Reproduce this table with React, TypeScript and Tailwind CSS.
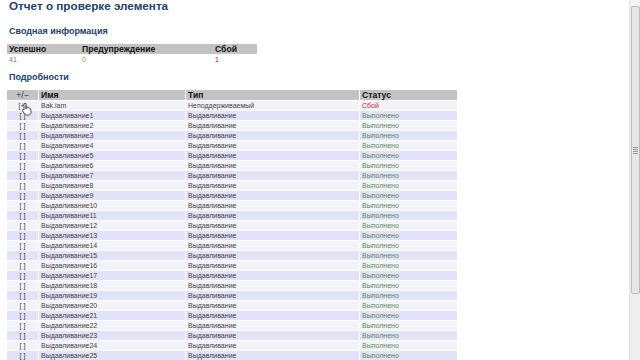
import React from "react";

const rows: { name: string; type: string; status: string; fail?: boolean }[] = [
  { name: "Bak.iam", type: "Неподдерживаемый", status: "Сбой", fail: true },
  ...Array.from({ length: 25 }, (_, i) => ({
    name: `Выдавливание${i + 1}`,
    type: "Выдавливание",
    status: "Выполнено",
  })),
];

function Hand() {
  return (
    <svg width="12" height="14" viewBox="0 0 12 14" className="absolute left-[21px] top-[102px]">
      <path
        d="M4 1.2c.6 0 1 .4 1 1V7l.2-2.2c.5-.4 1.2-.3 1.5.2l.1.6c.5-.4 1.2-.3 1.5.3v.5c.6-.3 1.3 0 1.4.6L10 10.5c0 1.6-1.2 2.6-2.7 2.6H6c-1.2 0-1.8-.5-2.5-1.4L1.4 8.6c-.3-.5 0-1.1.6-1.2.4 0 .8.2 1 .5V2.2c0-.6.4-1 1-1z"
        fill="#fff"
        stroke="#222"
        strokeWidth="0.8"
      />
    </svg>
  );
}

export default function App() {
  return (
    <div
      className="w-[640px] h-[360px] overflow-hidden bg-white flex relative"
      style={{ fontFamily: '"Liberation Sans", Arial, sans-serif' }}
    >
      <div className="flex-1 flex flex-col pl-[7px]">
        <div className="h-[12px] pl-[2px] text-[11.7px] leading-[12px] font-bold text-[#22406e]">
          Отчет о проверке элемента
        </div>
        <div className="mt-[14px] h-[11px] pl-[2px] text-[9px] leading-[11px] font-bold text-[#22406e]">
          Сводная информация
        </div>
        <div className="mt-[7px] w-[250px] flex flex-col gap-px">
          <div className="flex h-[10px] bg-[#c3c3c3] text-[8.6px] leading-[10px] font-bold text-[#111]">
            <div className="w-[73px] pl-[2px]">Успешно</div>
            <div className="w-[133px] pl-[2px]">Предупреждение</div>
            <div className="flex-1 pl-[2px]">Сбой</div>
          </div>
          <div className="flex h-[10px] text-[7px] leading-[10px]">
            <div className="w-[73px] pl-[2px] text-[#777]">41</div>
            <div className="w-[133px] pl-[2px] text-[#a89c10]">0</div>
            <div className="flex-1 pl-[2px] text-[#c01010]">1</div>
          </div>
        </div>
        <div className="mt-[7px] h-[11px] pl-[2px] text-[9px] leading-[11px] font-bold text-[#22406e]">
          Подробности
        </div>
        <div className="mt-[7px] w-[450px] flex flex-col gap-px">
          <div className="flex gap-px h-[10px] text-[8.6px] leading-[10px] font-bold text-[#111]">
            <div className="w-[31px] bg-[#c3c3c3] text-center font-normal text-[#333]">+/−</div>
            <div className="w-[146px] bg-[#c3c3c3] pl-[2px]">Имя</div>
            <div className="w-[173px] bg-[#c3c3c3] pl-[2px]">Тип</div>
            <div className="flex-1 bg-[#c3c3c3] pl-[2px]">Статус</div>
          </div>
          {rows.map((r, i) => {
            const bg = i % 2 === 1 ? "bg-[#e2e2f9]" : "bg-[#f3f3fc]";
            return (
              <div key={i} className="flex gap-px h-[9px] text-[7px] leading-[9px] text-[#444]">
                <div className={`w-[31px] ${bg} text-center text-[#333]`}>{i === 0 ? "[+]" : "[ ]"}</div>
                <div className={`w-[146px] ${bg} pl-[2px]`}>{r.name}</div>
                <div className={`w-[173px] ${bg} pl-[2px]`}>{r.type}</div>
                <div className={`flex-1 ${bg} pl-[2px] ${r.fail ? "text-[#c41a1a]" : "text-[#5a8a55]"}`}>
                  {r.status}
                </div>
              </div>
            );
          })}
        </div>
      </div>
      <div className="w-[11px] h-full bg-[#eeeeee] border-l border-[#e2e2e2] flex flex-col items-center">
        <div className="h-[5px] w-full bg-[#f4f4f4]" />
        <div className="mt-px w-[9px] h-[288px] bg-[#e6e6e6] border border-[#bcbcbc] rounded-[2px] flex items-center justify-center">
          <div className="flex flex-col gap-px">
            <div className="w-[5px] h-px bg-[#999]" />
            <div className="w-[5px] h-px bg-[#999]" />
            <div className="w-[5px] h-px bg-[#999]" />
            <div className="w-[5px] h-px bg-[#999]" />
          </div>
        </div>
      </div>
      <Hand />
    </div>
  );
}
